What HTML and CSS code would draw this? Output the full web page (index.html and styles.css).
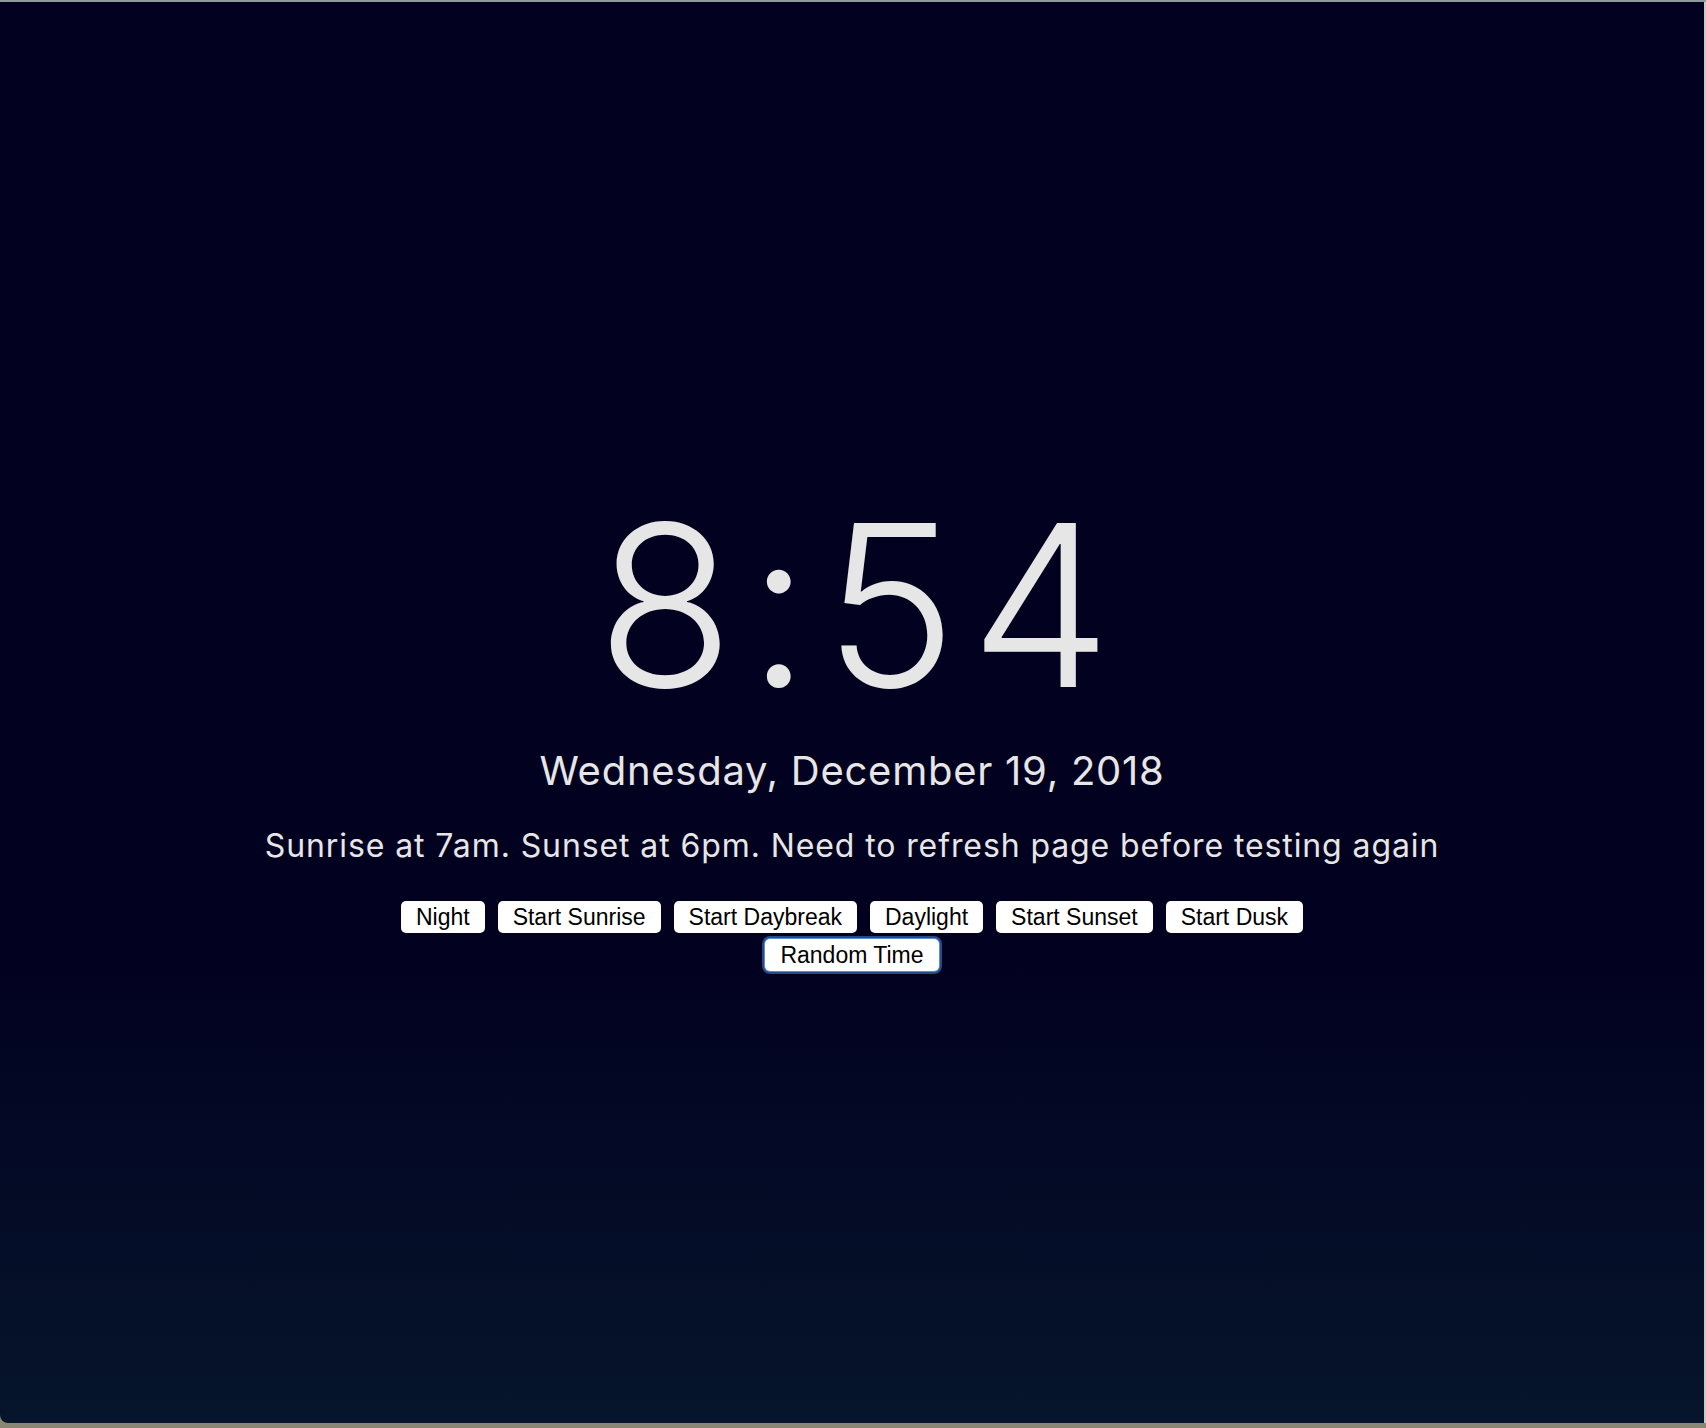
FILE: index.html
```html
<!DOCTYPE html>
<html lang="en">
<head>
<meta charset="utf-8">
<title>Clock</title>
<link rel="stylesheet" href="styles.css">
</head>
<body>
<div class="screen">
  <div class="window">
    <main class="content">
      <div class="clock">8:54</div>
      <div class="date">Wednesday, December 19, 2018</div>
      <p class="note">Sunrise at 7am. Sunset at 6pm. Need to refresh page before testing again</p>
      <div class="controls">
        <button class="btn">Night</button>
        <button class="btn">Start Sunrise</button>
        <button class="btn">Start Daybreak</button>
        <button class="btn">Daylight</button>
        <button class="btn">Start Sunset</button>
        <button class="btn">Start Dusk</button>
        <button class="btn btn-focused">Random Time</button>
      </div>
    </main>
  </div>
  <div class="edge-right"></div>
</div>
</body>
</html>
```

FILE: styles.css
```css
html, body {
  margin: 0;
  padding: 0;
  height: 100%;
}

body {
  background: #8a8674;
  overflow: hidden;
}

.screen {
  display: flex;
  height: 1423px;
  border-top: 2px solid #8d9b9b;
  box-sizing: border-box;
}

.window {
  flex: 1;
  background: linear-gradient(to bottom, #020220 0%, #020220 68%, #06152c 100%);
  border-bottom-left-radius: 8px;
}

.edge-right {
  width: 2px;
  background: #c9c9c9;
}

.content {
  display: flex;
  flex-direction: column;
  align-items: center;
  padding-top: 491px;
  color: #e6e6e6;
  font-family: "Inter", "DejaVu Sans", sans-serif;
}

.clock {
  font-size: 225px;
  font-weight: 300;
  line-height: 1;
  letter-spacing: 13px;
  padding-left: 17px;
}

.date {
  margin-top: 29px;
  font-size: 40px;
  font-weight: 400;
  line-height: 48px;
  letter-spacing: 0.75px;
}

.note {
  margin: 32px 0 0;
  font-size: 32px;
  font-weight: 400;
  line-height: 38px;
  letter-spacing: 0.9px;
}

.controls {
  display: flex;
  flex-wrap: wrap;
  justify-content: center;
  column-gap: 13px;
  row-gap: 6px;
  max-width: 960px;
  margin-top: 36px;
}

.btn {
  font-family: "Liberation Sans", Arial, sans-serif;
  font-size: 23px;
  line-height: 24px;
  padding: 4px 15px;
  border: none;
  border-radius: 5px;
  background: #ffffff;
  color: #000000;
}

.btn-focused {
  box-shadow: 0 0 0 1px #5b8bd0, 0 0 0 3px #274a86;
}
```
